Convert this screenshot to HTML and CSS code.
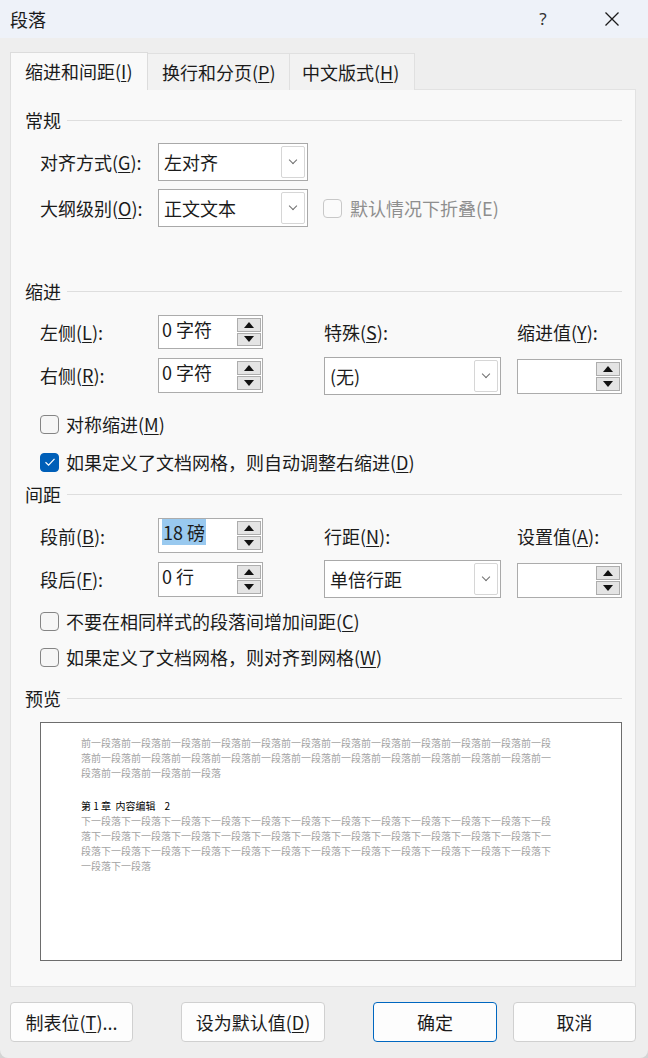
FILE: index.html
```html
<!DOCTYPE html>
<html lang="zh-CN">
<head>
    <meta charset="UTF-8">
    <meta name="viewport" content="width=device-width, initial-scale=1.0">
    <title>段落</title>
    <link rel="stylesheet" href="styles.css">
</head>
<body>
<div class="window">
    <!-- 标题栏 -->
    <div class="titlebar">
        <span class="title">段落</span>
        <span class="title-btn help">?</span>
        <span class="title-btn close">
            <svg width="16" height="16" viewBox="0 0 16 16"><path d="M1.5 1.5 L14.5 14.5 M14.5 1.5 L1.5 14.5" stroke="#1b1b1b" stroke-width="1.3" fill="none"/></svg>
        </span>
    </div>

    <div class="content">
        <!-- 选项卡 -->
        <div class="tabs">
            <div class="tab active tab1">缩进和间距(<u>I</u>)</div>
            <div class="tab tab2">换行和分页(<u>P</u>)</div>
            <div class="tab tab3">中文版式(<u>H</u>)</div>
        </div>

        <div class="panel">
            <!-- 常规 -->
            <div class="group-title">常规</div>
            <div class="grid general">
                <label class="lbl">对齐方式(<u>G</u>):</label>
                <div class="select w150"><span>左对齐</span><span class="drop"></span></div>
                <span></span>
                <span></span>
                <label class="lbl">大纲级别(<u>O</u>):</label>
                <div class="select w150"><span>正文文本</span><span class="drop"></span></div>
                <label class="check disabled"><span class="box"></span>默认情况下折叠(E)</label>
                <span></span>
            </div>

            <!-- 缩进 -->
            <div class="group-title indent-title">缩进</div>
            <div class="grid indent">
                <label class="lbl">左侧(<u>L</u>):</label>
                <div class="spin"><span class="val">0 字符</span><span class="arrows"><i class="up"></i><i class="down"></i></span></div>
                <label class="lbl">特殊(<u>S</u>):</label>
                <label class="lbl">缩进值(<u>Y</u>):</label>

                <label class="lbl">右侧(<u>R</u>):</label>
                <div class="spin"><span class="val">0 字符</span><span class="arrows"><i class="up"></i><i class="down"></i></span></div>
                <div class="select w177"><span>(无)</span><span class="drop"></span></div>
                <div class="spin empty"><span class="val"></span><span class="arrows"><i class="up"></i><i class="down"></i></span></div>
            </div>
            <label class="check row mirror"><span class="box"></span>对称缩进(<u>M</u>)</label>
            <label class="check row grid-adjust"><span class="box checked"><svg width="12" height="10" viewBox="0 0 12 10"><path d="M1.5 5.2 L4.6 8.2 L10.5 1.8" stroke="#fff" stroke-width="1.2" fill="none"/></svg></span>如果定义了文档网格，则自动调整右缩进(<u>D</u>)</label>

            <!-- 间距 -->
            <div class="group-title spacing-title">间距</div>
            <div class="grid spacing">
                <label class="lbl">段前(<u>B</u>):</label>
                <div class="spin"><span class="val"><span class="sel">18 磅</span></span><span class="arrows"><i class="up"></i><i class="down"></i></span></div>
                <label class="lbl">行距(<u>N</u>):</label>
                <label class="lbl">设置值(<u>A</u>):</label>

                <label class="lbl">段后(<u>F</u>):</label>
                <div class="spin"><span class="val">0 行</span><span class="arrows"><i class="up"></i><i class="down"></i></span></div>
                <div class="select w177"><span>单倍行距</span><span class="drop"></span></div>
                <div class="spin empty"><span class="val"></span><span class="arrows"><i class="up"></i><i class="down"></i></span></div>
            </div>
            <label class="check row no-space"><span class="box"></span>不要在相同样式的段落间增加间距(<u>C</u>)</label>
            <label class="check row snap"><span class="box"></span>如果定义了文档网格，则对齐到网格(<u>W</u>)</label>

            <!-- 预览 -->
            <div class="group-title preview-title">预览</div>
            <div class="preview">
                <p class="prev-text" id="prev-before"></p>
                <p class="prev-heading">第 1 章&nbsp; 内容编辑&nbsp;&nbsp;&nbsp; 2</p>
                <p class="prev-text" id="prev-after"></p>
            </div>
        </div>

        <!-- 底部按钮 -->
        <div class="buttons">
            <div class="btn-group">
                <button class="btn w123">制表位(<u>T</u>)...</button>
                <button class="btn w144">设为默认值(<u>D</u>)</button>
            </div>
            <div class="btn-group right">
                <button class="btn w124 primary">确定</button>
                <button class="btn w123">取消</button>
            </div>
        </div>
    </div>
</div>

<script>
    // 预览文字
    document.getElementById('prev-before').textContent = '前一段落'.repeat(27);
    document.getElementById('prev-after').textContent = '下一段落'.repeat(37);
</script>
</body>
</html>
```

FILE: styles.css
```css
html {
    background: #d4d4d4;
}

body {
    margin: 0;
    font-family: "Noto Sans CJK SC", "Noto Sans", sans-serif;
    font-size: 18px;
    color: #1b1b1b;
}

u {
    text-decoration-thickness: 1px;
    text-underline-offset: 2px;
}

.window {
    width: 648px;
    height: 1058px;
    background-color: #eeeeee;
    border-radius: 0 0 8px 8px;
    overflow: hidden;
}

/* 标题栏 */
.titlebar {
    height: 38px;
    display: flex;
    align-items: center;
    background-color: #eef2f9;
    padding-left: 10px;
}

.title {
    flex: 1;
    line-height: 20px;
}

.title-btn {
    width: 32px;
    text-align: center;
    line-height: 20px;
}

.help {
    margin-right: 37px;
    font-family: "Noto Sans", sans-serif;
    font-size: 17px;
    color: #333;
}

.close {
    margin-right: 20px;
    display: flex;
    justify-content: center;
}

.content {
    padding: 14px 12px 0 10px;
}

/* 选项卡 */
.tabs {
    display: flex;
    align-items: flex-end;
    height: 38px;
    margin-bottom: -1px;
    position: relative;
}

.tab {
    box-sizing: border-box;
    height: 37px;
    line-height: 36px;
    padding-left: 14px;
    background-color: #f2f2f2;
    border: 1px solid #e0e0e0;
    border-bottom: none;
    margin-left: -1px;
    white-space: nowrap;
}

.tab.active {
    height: 38px;
    background-color: #f9f9f9;
    border-color: #dcdcdc;
    margin-left: 0;
    z-index: 1;
}

.tab1 { width: 138px; }
.tab2 { width: 143px; }
.tab3 { width: 126px; padding-left: 12px; }

.panel {
    background-color: #f9f9f9;
    border: 1px solid #e2e2e2;
    height: 898px;
    box-sizing: border-box;
    padding: 19px 13px 0 14px;
}

.group-title {
    display: flex;
    align-items: center;
    height: 22px;
    line-height: 22px;
}

.group-title::after {
    content: "";
    flex: 1;
    height: 1px;
    background-color: #dedede;
    margin-left: 6px;
}

.grid {
    display: grid;
    grid-template-columns: 118px 166px 193px 1fr;
    margin-left: 15px;
    align-items: center;
}

.general {
    margin-top: 12px;
    grid-template-rows: 38px 38px;
    row-gap: 8px;
}

.indent-title { margin-top: 53px; }

.indent {
    margin-top: 13px;
    grid-template-rows: 34px 40px;
    row-gap: 6px;
}

.spacing-title { margin-top: 9px; }

.spacing {
    margin-top: 13px;
    grid-template-rows: 35px 38px;
    row-gap: 7px;
}

.lbl {
    line-height: 22px;
    white-space: nowrap;
}

/* 下拉框 */
.select {
    box-sizing: border-box;
    height: 38px;
    border: 1px solid #a9a9a9;
    background-color: #fff;
    display: flex;
    align-items: center;
    justify-content: space-between;
    padding: 0 2px 0 5px;
}

.w150 { width: 150px; }
.w177 { width: 177px; }

.select .drop {
    box-sizing: border-box;
    width: 24px;
    height: 32px;
    border: 1px solid #d6d6d6;
    border-radius: 2px;
    position: relative;
}

.select .drop::after {
    content: "";
    position: absolute;
    left: 8px;
    top: 10px;
    width: 5px;
    height: 5px;
    border-right: 1px solid #6f6f6f;
    border-bottom: 1px solid #6f6f6f;
    transform: rotate(45deg);
}

.indent .select,
.spacing .select {
    align-self: end;
}

/* 微调框 */
.spin {
    box-sizing: border-box;
    width: 105px;
    height: 35px;
    border: 1px solid #acacac;
    background-color: #fff;
    display: flex;
    justify-content: space-between;
    padding: 2px 1px 2px 2px;
}

.indent .spin:first-of-type {
    height: 34px;
}

.spin .val {
    line-height: 22px;
    padding-left: 1px;
    white-space: nowrap;
}

.spin .sel {
    background-color: #99c9ef;
    padding: 0 1px;
}

.spin .arrows {
    display: flex;
    flex-direction: column;
    gap: 1px;
    width: 24px;
}

.spin i {
    flex: 1;
    box-sizing: border-box;
    border: 1px solid #adadad;
    background-color: #e4e4e4;
    display: flex;
    align-items: center;
    justify-content: center;
}

.spin i::after {
    content: "";
    border-left: 5px solid transparent;
    border-right: 5px solid transparent;
}

.spin .up::after {
    border-bottom: 6px solid #111;
}

.spin .down::after {
    border-top: 6px solid #111;
}

.spin.empty {
    margin-top: 2px;
}

/* 复选框 */
.check {
    display: flex;
    align-items: center;
    height: 24px;
    white-space: nowrap;
}

.check .box {
    box-sizing: border-box;
    width: 19px;
    height: 19px;
    border: 1px solid #858585;
    border-radius: 4px;
    background-color: #f6f6f6;
    margin-right: 7px;
    display: flex;
    align-items: center;
    justify-content: center;
}

.check .box.checked {
    background-color: #005fb8;
    border-color: #005fb8;
}

.check.disabled {
    color: #8e8e8e;
}

.check.disabled .box {
    border-color: #c8c8c8;
    background-color: #fbfbfb;
    margin-left: -1px;
    margin-right: 8px;
}

.check.row {
    margin-left: 15px;
}

.mirror { margin-top: 17px; }
.grid-adjust { margin-top: 14px; }
.no-space { margin-top: 11px; }
.snap { margin-top: 12px; }
.preview-title { margin-top: 18px; }

/* 预览 */
.preview {
    margin: 13px 0 0 15px;
    height: 239px;
    box-sizing: border-box;
    border: 1px solid #6d6d6d;
    background-color: #fff;
    padding: 12px 0 0 40px;
    font-size: 10px;
    line-height: 15px;
}

.preview p {
    margin: 0;
    width: 472px;
}

.prev-text {
    color: #a3a3a3;
}

.prev-heading {
    margin-top: 18px !important;
    color: #000;
}

/* 按钮 */
.buttons {
    display: flex;
    justify-content: space-between;
    margin-top: 15px;
}

.btn-group {
    display: flex;
    gap: 48px;
}

.btn-group.right {
    gap: 16px;
}

.btn {
    height: 40px;
    font-family: inherit;
    font-size: 18px;
    color: #1b1b1b;
    background-color: #fdfdfd;
    border: 1px solid #d0d0d0;
    border-radius: 4px;
    padding: 0;
}

.btn.primary {
    border-color: #0067c0;
}

.w123 { width: 123px; }
.w124 { width: 124px; }
.w144 { width: 144px; }
```
